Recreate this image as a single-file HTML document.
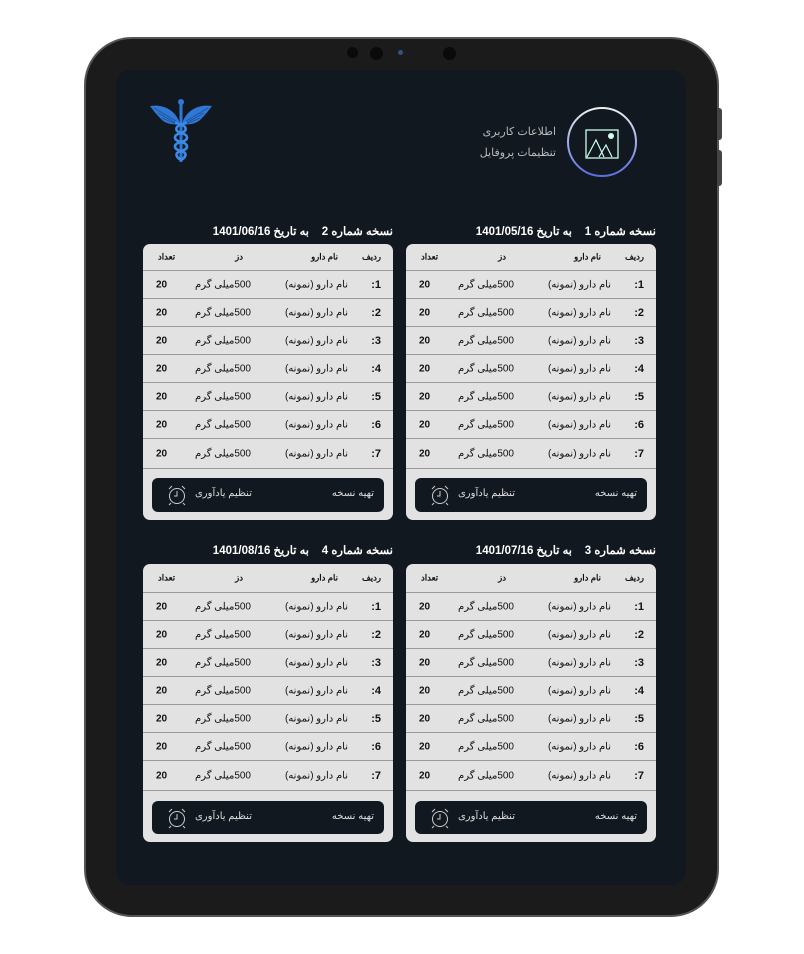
<!DOCTYPE html>
<html><head><meta charset="utf-8">
<style>
*{margin:0;padding:0;box-sizing:border-box}
body{width:804px;height:954px;background:#fff;position:relative;overflow:hidden;font-family:"Liberation Sans","Noto Sans CJK SC",sans-serif}
.dev{position:absolute;left:84px;top:37px;width:635px;height:880px;border-radius:48px;background:#1b1b1b;border:2px solid #555}
.btn{position:absolute;left:717px;width:5px;background:#444;border-radius:0 3px 3px 0}
.scr{position:absolute;left:116px;top:70px;width:570px;height:815px;border-radius:14px;background:#111820}
.cam{position:absolute;top:47px;border-radius:50%;background:#0a0a0a}
.t{position:absolute;color:#fff;font-size:11.5px;font-weight:bold;direction:rtl;white-space:nowrap}
.card{position:absolute;width:250px;background:#e2e2e2;border-radius:7px;overflow:hidden}
.r{position:relative;height:28px;border-bottom:1px solid #9a9a9a;font-size:10px;color:#111}
.r span{position:absolute;top:50%;transform:translateY(-50%);white-space:nowrap;direction:rtl}
.h{height:27px;font-size:8.5px;font-weight:bold}
.r .a{right:12px}.r .b{right:45px}.r .c{right:142px}.r .d{left:13px;font-weight:bold}
.h .b{right:55px}.h .c{right:150px}.h .d{left:15px}
.r .a{font-weight:bold;font-size:11px}.h .a{font-size:8.5px}
.last{height:30px}
.fb{position:absolute;left:9px;right:9px;height:34px;background:#111820;border-radius:6px;color:#ddd;font-size:10px}
.fb span{position:absolute;top:10px;direction:rtl;white-space:nowrap}
.fb svg{position:absolute;left:14px;top:6px}
</style></head><body>
<div class="dev"></div>
<div class="btn" style="top:108px;height:32px"></div>
<div class="btn" style="top:150px;height:36px"></div>
<div class="cam" style="left:347px;width:11px;height:11px"></div>
<div class="cam" style="left:370px;width:13px;height:13px"></div>
<div class="cam" style="left:398px;top:50px;width:5px;height:5px;background:#34508a"></div>
<div class="cam" style="left:443px;width:13px;height:13px"></div>
<div class="scr"></div>

<svg style="position:absolute;left:148px;top:97px" width="66" height="70" viewBox="0 0 66 70">
<g fill="#2f78d6">
<path d="M31 24 C26 12 14 7 2 9 C5 13 8 17 12 21 C17 27 25 28 31 27Z"/>
<path d="M35 24 C40 12 52 7 64 9 C61 13 58 17 54 21 C49 27 41 28 35 27Z"/>
<circle cx="33" cy="5" r="3"/>
<rect x="31.5" y="5" width="3" height="60"/>
</g>
<g fill="none" stroke="#1d4f95" stroke-width="0.8">
<path d="M6 11 L28 24 M10 16 L28 26 M14 21 L28 27 M60 11 L38 24 M56 16 L38 26 M52 21 L38 27"/>
</g>
<g fill="none" stroke="#3b8ae8" stroke-width="2.6">
<path d="M27 26 C40 28 40 34 33 36 C25 38 25 43 33 45 C41 47 41 52 33 54 C26 56 28 60 33 63"/>
<path d="M39 26 C26 28 26 34 33 36 C41 38 41 43 33 45 C25 47 25 52 33 54 C40 56 38 60 33 63"/>
</g>
</svg>

<svg style="position:absolute;left:566px;top:107px" width="72" height="72" viewBox="0 0 72 72">
<defs><linearGradient id="g" x1="0" y1="0" x2="0" y2="1"><stop offset="0" stop-color="#eee"/><stop offset="1" stop-color="#5a6ee0"/></linearGradient></defs>
<circle cx="36" cy="35" r="34" fill="none" stroke="url(#g)" stroke-width="2"/>
<rect x="20" y="23" width="32" height="28" fill="none" stroke="#cfe" stroke-width="1.3"/>
<circle cx="45" cy="29" r="3" fill="#cfe"/>
<path d="M21 50 L30 33 L38 50 M33 50 L40 38 L46 50" fill="none" stroke="#cfe" stroke-width="1.2"/>
</svg>
<div style="position:absolute;right:248px;top:125px;color:#bbb;font-size:11px;direction:rtl">اطلاعات کاربری</div>
<div style="position:absolute;right:248px;top:146px;color:#bbb;font-size:11px;direction:rtl">تنظیمات پروفایل</div>

<div class="t" style="right:148px;top:224px">نسخه شماره 1&nbsp;&nbsp;&nbsp; به تاریخ 1401/05/16</div>
<div class="t" style="right:411px;top:224px">نسخه شماره 2&nbsp;&nbsp;&nbsp; به تاریخ 1401/06/16</div>
<div class="t" style="right:148px;top:543px">نسخه شماره 3&nbsp;&nbsp;&nbsp; به تاریخ 1401/07/16</div>
<div class="t" style="right:411px;top:543px">نسخه شماره 4&nbsp;&nbsp;&nbsp; به تاریخ 1401/08/16</div>

<div class="card" style="left:406px;top:244px;height:276px">
<div class="r h"><span class="a">ردیف</span><span class="b">نام دارو</span><span class="c">دز</span><span class="d">تعداد</span></div>
<div class="r"><span class="a">1:</span><span class="b">نام دارو (نمونه)</span><span class="c">500میلی گرم</span><span class="d">20</span></div>
<div class="r"><span class="a">2:</span><span class="b">نام دارو (نمونه)</span><span class="c">500میلی گرم</span><span class="d">20</span></div>
<div class="r"><span class="a">3:</span><span class="b">نام دارو (نمونه)</span><span class="c">500میلی گرم</span><span class="d">20</span></div>
<div class="r"><span class="a">4:</span><span class="b">نام دارو (نمونه)</span><span class="c">500میلی گرم</span><span class="d">20</span></div>
<div class="r"><span class="a">5:</span><span class="b">نام دارو (نمونه)</span><span class="c">500میلی گرم</span><span class="d">20</span></div>
<div class="r"><span class="a">6:</span><span class="b">نام دارو (نمونه)</span><span class="c">500میلی گرم</span><span class="d">20</span></div>
<div class="r last"><span class="a">7:</span><span class="b">نام دارو (نمونه)</span><span class="c">500میلی گرم</span><span class="d">20</span></div>
<div class="fb" style="top:234px"><span style="right:10px">تهیه نسخه</span><span style="right:132px">تنظیم یادآوری</span>
<svg width="22" height="22" viewBox="0 0 22 22" fill="none" stroke="#ccc" stroke-width="1"><circle cx="11" cy="12" r="7.5"/><path d="M11 7v5h-3M3 5l3-3M19 5l-3-3M5 19l-2 2M17 19l2 2"/></svg></div>
</div>

<div class="card" style="left:143px;top:244px;height:276px">
<div class="r h"><span class="a">ردیف</span><span class="b">نام دارو</span><span class="c">دز</span><span class="d">تعداد</span></div>
<div class="r"><span class="a">1:</span><span class="b">نام دارو (نمونه)</span><span class="c">500میلی گرم</span><span class="d">20</span></div>
<div class="r"><span class="a">2:</span><span class="b">نام دارو (نمونه)</span><span class="c">500میلی گرم</span><span class="d">20</span></div>
<div class="r"><span class="a">3:</span><span class="b">نام دارو (نمونه)</span><span class="c">500میلی گرم</span><span class="d">20</span></div>
<div class="r"><span class="a">4:</span><span class="b">نام دارو (نمونه)</span><span class="c">500میلی گرم</span><span class="d">20</span></div>
<div class="r"><span class="a">5:</span><span class="b">نام دارو (نمونه)</span><span class="c">500میلی گرم</span><span class="d">20</span></div>
<div class="r"><span class="a">6:</span><span class="b">نام دارو (نمونه)</span><span class="c">500میلی گرم</span><span class="d">20</span></div>
<div class="r last"><span class="a">7:</span><span class="b">نام دارو (نمونه)</span><span class="c">500میلی گرم</span><span class="d">20</span></div>
<div class="fb" style="top:234px"><span style="right:10px">تهیه نسخه</span><span style="right:132px">تنظیم یادآوری</span>
<svg width="22" height="22" viewBox="0 0 22 22" fill="none" stroke="#ccc" stroke-width="1"><circle cx="11" cy="12" r="7.5"/><path d="M11 7v5h-3M3 5l3-3M19 5l-3-3M5 19l-2 2M17 19l2 2"/></svg></div>
</div>

<div class="card" style="left:406px;top:564px;height:278px">
<div class="r h" style="height:29px"><span class="a">ردیف</span><span class="b">نام دارو</span><span class="c">دز</span><span class="d">تعداد</span></div>
<div class="r"><span class="a">1:</span><span class="b">نام دارو (نمونه)</span><span class="c">500میلی گرم</span><span class="d">20</span></div>
<div class="r"><span class="a">2:</span><span class="b">نام دارو (نمونه)</span><span class="c">500میلی گرم</span><span class="d">20</span></div>
<div class="r"><span class="a">3:</span><span class="b">نام دارو (نمونه)</span><span class="c">500میلی گرم</span><span class="d">20</span></div>
<div class="r"><span class="a">4:</span><span class="b">نام دارو (نمونه)</span><span class="c">500میلی گرم</span><span class="d">20</span></div>
<div class="r"><span class="a">5:</span><span class="b">نام دارو (نمونه)</span><span class="c">500میلی گرم</span><span class="d">20</span></div>
<div class="r"><span class="a">6:</span><span class="b">نام دارو (نمونه)</span><span class="c">500میلی گرم</span><span class="d">20</span></div>
<div class="r last"><span class="a">7:</span><span class="b">نام دارو (نمونه)</span><span class="c">500میلی گرم</span><span class="d">20</span></div>
<div class="fb" style="top:237px;height:33px"><span style="right:10px">تهیه نسخه</span><span style="right:132px">تنظیم یادآوری</span>
<svg width="22" height="22" viewBox="0 0 22 22" fill="none" stroke="#ccc" stroke-width="1"><circle cx="11" cy="12" r="7.5"/><path d="M11 7v5h-3M3 5l3-3M19 5l-3-3M5 19l-2 2M17 19l2 2"/></svg></div>
</div>

<div class="card" style="left:143px;top:564px;height:278px">
<div class="r h" style="height:29px"><span class="a">ردیف</span><span class="b">نام دارو</span><span class="c">دز</span><span class="d">تعداد</span></div>
<div class="r"><span class="a">1:</span><span class="b">نام دارو (نمونه)</span><span class="c">500میلی گرم</span><span class="d">20</span></div>
<div class="r"><span class="a">2:</span><span class="b">نام دارو (نمونه)</span><span class="c">500میلی گرم</span><span class="d">20</span></div>
<div class="r"><span class="a">3:</span><span class="b">نام دارو (نمونه)</span><span class="c">500میلی گرم</span><span class="d">20</span></div>
<div class="r"><span class="a">4:</span><span class="b">نام دارو (نمونه)</span><span class="c">500میلی گرم</span><span class="d">20</span></div>
<div class="r"><span class="a">5:</span><span class="b">نام دارو (نمونه)</span><span class="c">500میلی گرم</span><span class="d">20</span></div>
<div class="r"><span class="a">6:</span><span class="b">نام دارو (نمونه)</span><span class="c">500میلی گرم</span><span class="d">20</span></div>
<div class="r last"><span class="a">7:</span><span class="b">نام دارو (نمونه)</span><span class="c">500میلی گرم</span><span class="d">20</span></div>
<div class="fb" style="top:237px;height:33px"><span style="right:10px">تهیه نسخه</span><span style="right:132px">تنظیم یادآوری</span>
<svg width="22" height="22" viewBox="0 0 22 22" fill="none" stroke="#ccc" stroke-width="1"><circle cx="11" cy="12" r="7.5"/><path d="M11 7v5h-3M3 5l3-3M19 5l-3-3M5 19l-2 2M17 19l2 2"/></svg></div>
</div>
</body></html>
